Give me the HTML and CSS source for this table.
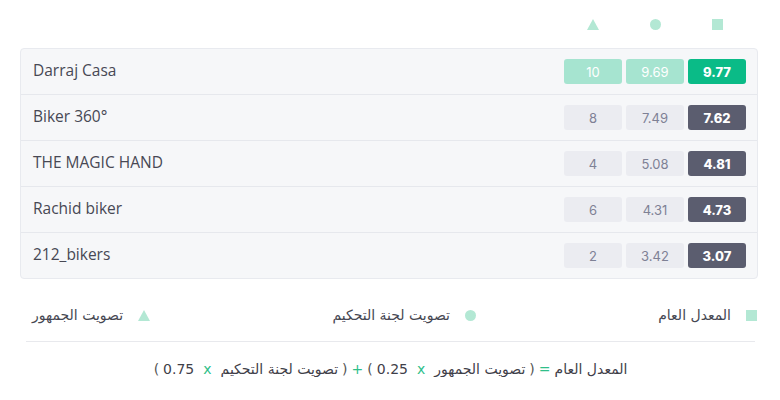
FILE: index.html
```html
<!DOCTYPE html>
<html lang="ar">
<head>
<meta charset="utf-8">
<link rel="stylesheet" href="styles.css">
</head>
<body>
<div class="page">
  <div class="head">
    <div class="hcell"><span class="ico tri"></span></div>
    <div class="hcell"><span class="ico dot"></span></div>
    <div class="hcell"><span class="ico sq"></span></div>
  </div>
  <div class="card">
    <div class="row">
      <div class="name">Darraj Casa</div>
      <div class="scores lead"><span class="b">10</span><span class="b">9.69</span><span class="b total">9.77</span></div>
    </div>
    <div class="row">
      <div class="name">Biker 360°</div>
      <div class="scores"><span class="b">8</span><span class="b">7.49</span><span class="b total">7.62</span></div>
    </div>
    <div class="row">
      <div class="name">THE MAGIC HAND</div>
      <div class="scores"><span class="b">4</span><span class="b">5.08</span><span class="b total">4.81</span></div>
    </div>
    <div class="row">
      <div class="name">Rachid biker</div>
      <div class="scores"><span class="b">6</span><span class="b">4.31</span><span class="b total">4.73</span></div>
    </div>
    <div class="row">
      <div class="name">212_bikers</div>
      <div class="scores"><span class="b">2</span><span class="b">3.42</span><span class="b total">3.07</span></div>
    </div>
  </div>
  <div class="legend" dir="rtl">
    <div class="litem"><span class="ico sq"></span><span>المعدل العام</span></div>
    <div class="litem"><span class="ico dot"></span><span>تصويت لجنة التحكيم</span></div>
    <div class="litem"><span class="ico tri"></span><span>تصويت الجمهور</span></div>
  </div>
  <div class="formula" dir="rtl">
    <span>المعدل العام</span>
    <span class="op">=</span>
    <span class="p">(</span>
    <span>تصويت الجمهور</span>
    <span class="op x">x</span>
    <span>0.25</span>
    <span class="p">)</span>
    <span class="op">+</span>
    <span class="p">(</span>
    <span>تصويت لجنة التحكيم</span>
    <span class="op x">x</span>
    <span>0.75</span>
    <span class="p">)</span>
  </div>
</div>
</body>
</html>
```
FILE: styles.css
```css
html, body {
  margin: 0;
  padding: 0;
  background: #ffffff;
}
body {
  font-family: "Noto Sans", "DejaVu Sans", sans-serif;
  color: #4a4b57;
}
.page {
  width: 780px;
}
.head {
  height: 48px;
  display: flex;
  justify-content: flex-end;
  align-items: center;
  gap: 4px;
  padding-right: 34px;
}
.hcell {
  width: 58px;
  display: flex;
  justify-content: center;
  align-items: center;
}
.ico {
  display: inline-block;
  flex: none;
}
.ico.sq {
  width: 11px;
  height: 11px;
  background: #b3e8d4;
}
.ico.dot {
  width: 11px;
  height: 11px;
  border-radius: 50%;
  background: #b3e8d4;
}
.ico.tri {
  width: 0;
  height: 0;
  border-left: 6.5px solid transparent;
  border-right: 6.5px solid transparent;
  border-bottom: 11px solid #b3e8d4;
}
.card {
  margin: 0 22px 0 20px;
  border: 1px solid #e8eaef;
  border-radius: 4px;
  background: #f6f7f9;
}
.row {
  height: 45px;
  display: flex;
  align-items: center;
  justify-content: space-between;
  padding: 0 11px 0 12px;
  border-bottom: 1px solid #e6e8ed;
}
.row:last-child {
  border-bottom: none;
}
.name {
  font-family: "Open Sans", sans-serif;
  font-size: 15.5px;
  color: #474854;
  margin-top: -3px;
}
.scores {
  display: flex;
  gap: 4px;
}
.b {
  width: 58px;
  height: 25px;
  border-radius: 3px;
  background: #ebecf1;
  color: #7e8195;
  font-family: Inter, sans-serif;
  font-size: 13px;
  display: flex;
  align-items: center;
  justify-content: center;
}
.b.total {
  background: #5b5d6f;
  color: #ffffff;
  font-weight: 800;
}
.lead .b {
  background: #a6e4d0;
  color: #ffffff;
}
.lead .b.total {
  background: #0abb87;
}
.legend {
  display: flex;
  justify-content: space-between;
  align-items: center;
  margin: 26px 23px 0 32px;
  height: 20px;
  font-family: "DejaVu Sans", sans-serif;
  font-size: 14px;
  color: #464752;
}
.litem {
  display: flex;
  align-items: center;
  gap: 15px;
}
.formula {
  margin: 16px 25px 0 26px;
  border-top: 1px solid #e8e9ed;
  padding-top: 19px;
  display: flex;
  justify-content: center;
  align-items: center;
  gap: 4px;
  font-family: "DejaVu Sans", sans-serif;
  font-size: 14px;
  color: #3f4049;
}
.op {
  color: #2fbf8a;
}
.op.x {
  margin: 0 5px;
}
.p {
  color: #555;
}
```
